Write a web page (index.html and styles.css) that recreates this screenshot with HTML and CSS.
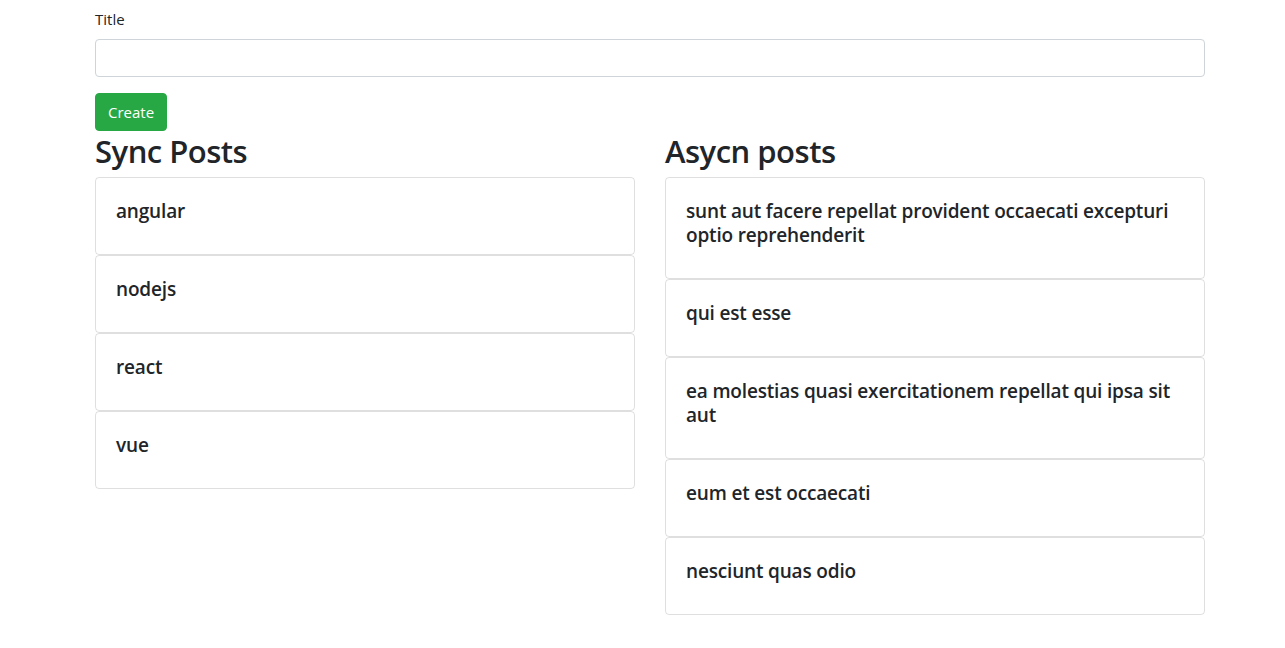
FILE: index.html
```html
<!DOCTYPE html>
<html lang="en">
<head>
<meta charset="utf-8">
<title>Posts</title>
<link rel="stylesheet" href="styles.css">
</head>
<body>
<div class="container">
  <form class="post-form">
    <div class="form-group">
      <label class="form-label" for="title">Title</label>
      <input class="form-control" id="title" type="text">
    </div>
    <button class="btn-create" type="button">Create</button>
  </form>
  <div class="row">
    <div class="col">
      <h2 class="heading">Sync Posts</h2>
      <div class="card"><h5 class="card-title">angular</h5></div>
      <div class="card"><h5 class="card-title">nodejs</h5></div>
      <div class="card"><h5 class="card-title">react</h5></div>
      <div class="card"><h5 class="card-title">vue</h5></div>
    </div>
    <div class="col">
      <h2 class="heading">Asycn posts</h2>
      <div class="card"><h5 class="card-title">sunt aut facere repellat provident occaecati excepturi optio reprehenderit</h5></div>
      <div class="card"><h5 class="card-title">qui est esse</h5></div>
      <div class="card"><h5 class="card-title">ea molestias quasi exercitationem repellat qui ipsa sit aut</h5></div>
      <div class="card"><h5 class="card-title">eum et est occaecati</h5></div>
      <div class="card"><h5 class="card-title">nesciunt quas odio</h5></div>
    </div>
  </div>
</div>
</body>
</html>
```

FILE: styles.css
```css
* { box-sizing: border-box; }
body {
  margin: 0;
  font-family: "Open Sans", "Noto Sans", sans-serif;
  font-size: 16px;
  line-height: 1.5;
  color: #212529;
  background: #fff;
}
.container {
  width: 1110px;
  margin-left: 95px;
  padding-top: 7px;
}
.form-group { margin-bottom: 16px; }
.form-label {
  display: block;
  margin-bottom: 8px;
  font-size: 15px;
  line-height: 24px;
}
.form-control {
  display: block;
  width: 100%;
  height: 38px;
  padding: 6px 12px;
  font: inherit;
  color: #495057;
  border: 1px solid #ced4da;
  border-radius: 4px;
  background: #fff;
}
.btn-create {
  display: block;
  height: 38px;
  padding: 6px 12px;
  font-family: inherit;
  font-size: 15px;
  line-height: 24px;
  color: #fff;
  background: #28a745;
  border: 1px solid #28a745;
  border-radius: 4px;
}
.row {
  display: flex;
  gap: 30px;
}
.col { flex: 1 1 0; min-width: 0; }
.heading {
  margin: 0 0 8px;
  padding-top: 1px;
  height: 38.4px;
  font-size: 31px;
  font-weight: 600;
  line-height: 38px;
  letter-spacing: -0.5px;
}
.card {
  padding: 21px 20px 19px;
  border: 1px solid rgba(0,0,0,.125);
  border-radius: 4px;
}
.card-title {
  margin: 0 0 12px;
  font-size: 19px;
  font-weight: 600;
  line-height: 24px;
  letter-spacing: -0.17px;
}
```
